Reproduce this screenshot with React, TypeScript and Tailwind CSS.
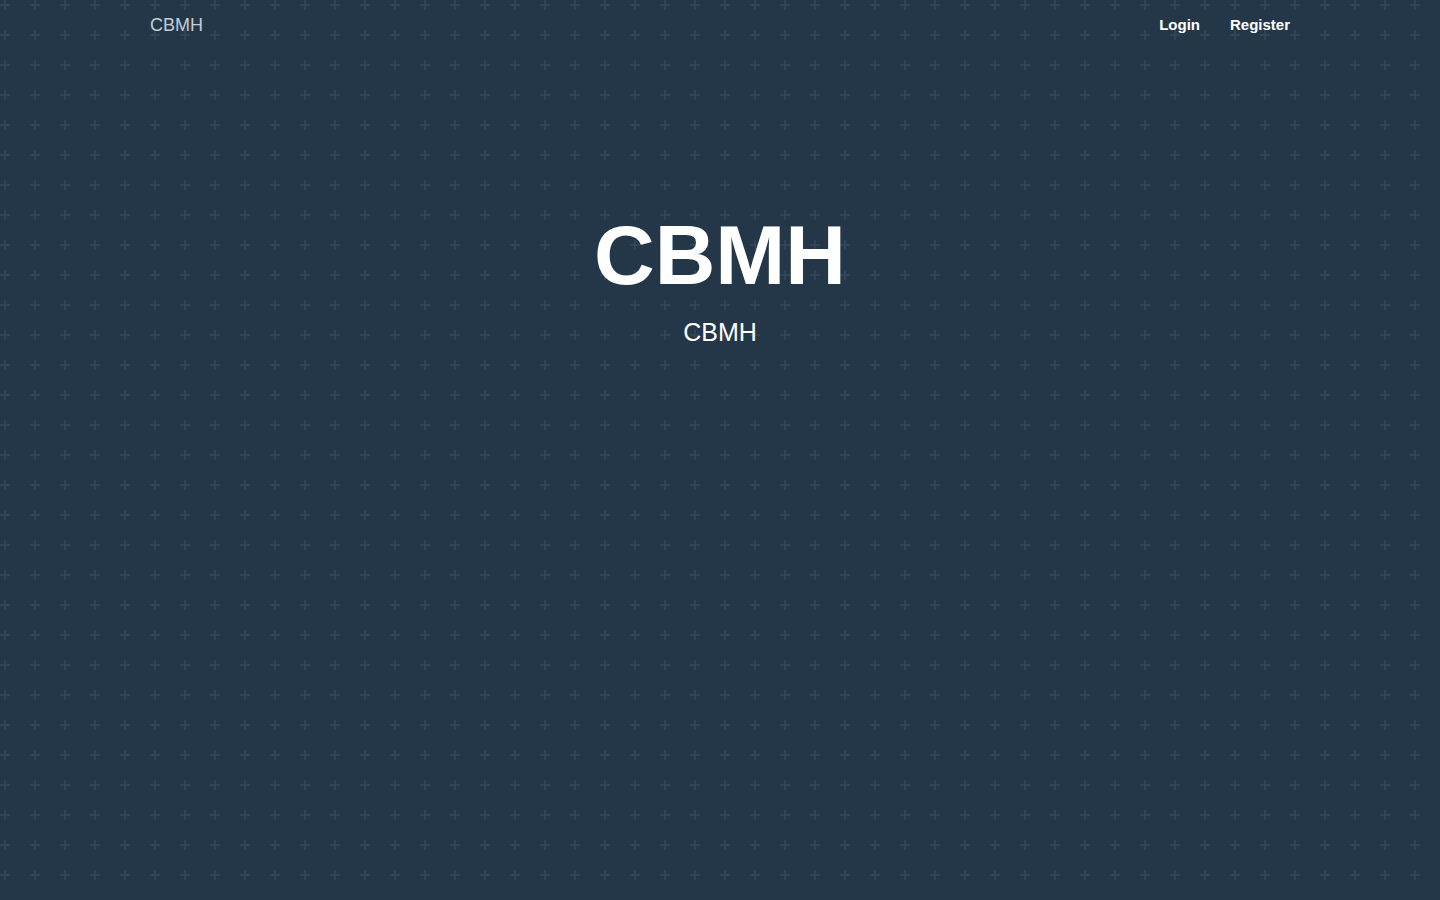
const font = { fontFamily: '"Liberation Sans", Arial, sans-serif' };

function PlusPattern() {
    return (
        <svg className="pointer-events-none absolute inset-0 h-full w-full" aria-hidden="true">
            <defs>
                <pattern id="plus" x="0" y="0" width="30" height="30" patternUnits="userSpaceOnUse">
                    <path d="M5 0v10M0 5h10" stroke="#34475a" strokeWidth="1.6" />
                </pattern>
            </defs>
            <rect width="100%" height="100%" fill="url(#plus)" />
        </svg>
    );
}

export default function App() {
    return (
        <div className="relative min-h-screen overflow-hidden bg-[#243748]" style={font}>
            <PlusPattern />
            <div className="relative">
                <nav className="mx-auto flex h-[50px] max-w-[1140px] items-center justify-between">
                    <a href="#" className="text-[18px] text-[#c3ccd5]">CBMH</a>
                    <div className="flex items-center gap-[30px] text-[15px] font-bold text-white">
                        <a href="#">Login</a>
                        <a href="#">Register</a>
                    </div>
                </nav>
                <header className="flex flex-col items-center pt-[163px] text-white">
                    <h1 className="text-[84px] font-bold leading-none">CBMH</h1>
                    <p className="mt-[23px] text-[25px] leading-none">CBMH</p>
                </header>
            </div>
        </div>
    );
}
